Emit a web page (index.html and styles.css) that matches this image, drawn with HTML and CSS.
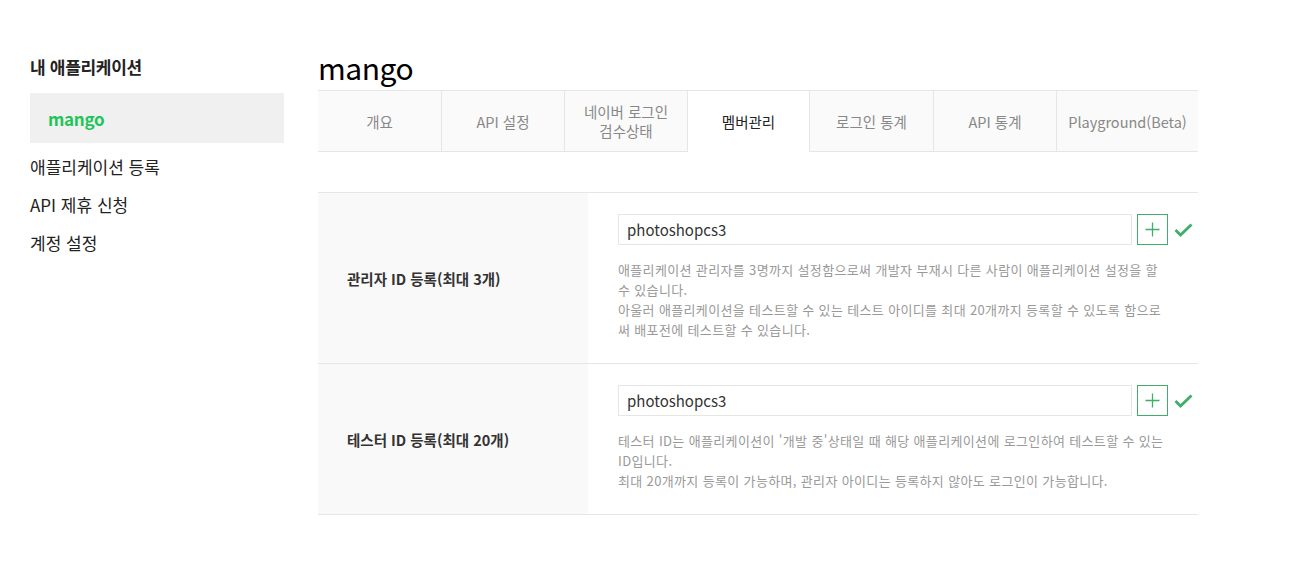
FILE: index.html
```html
<!DOCTYPE html>
<html lang="ko">
<head>
<meta charset="utf-8">
<title>mango - 멤버관리</title>
<link rel="stylesheet" href="styles.css">
</head>
<body>
<div class="page">
  <aside class="sidebar">
    <h2 class="side-title">내 애플리케이션</h2>
    <div class="app-item">mango</div>
    <ul class="side-menu">
      <li>애플리케이션 등록</li>
      <li>API 제휴 신청</li>
      <li>계정 설정</li>
    </ul>
  </aside>
  <main class="main">
    <h1 class="app-title">mango</h1>
    <nav class="tabs">
      <div class="tab">개요</div>
      <div class="tab">API 설정</div>
      <div class="tab two">네이버 로그인<br>검수상태</div>
      <div class="tab active">멤버관리</div>
      <div class="tab">로그인 통계</div>
      <div class="tab">API 통계</div>
      <div class="tab last">Playground(Beta)</div>
    </nav>
    <div class="table">
      <div class="row">
        <div class="th">관리자 ID 등록(최대 3개)</div>
        <div class="td">
          <div class="field">
            <div class="input">photoshopcs3</div>
            <div class="plus"><svg width="15" height="15" viewBox="0 0 15 15"><path d="M7.5 0.5v14M0.5 7.5h14" stroke="#3fae6a" stroke-width="1.3" fill="none"/></svg></div>
            <svg class="check" width="19" height="14" viewBox="0 0 19 14"><path d="M1.5 7l5 5L17.5 1.5" stroke="#3fae6a" stroke-width="2.8" fill="none"/></svg>
          </div>
          <p class="desc">애플리케이션 관리자를 3명까지 설정함으로써 개발자 부재시 다른 사람이 애플리케이션 설정을 할 수 있습니다.<br>아울러 애플리케이션을 테스트할 수 있는 테스트 아이디를 최대 20개까지 등록할 수 있도록 함으로써 배포전에 테스트할 수 있습니다.</p>
        </div>
      </div>
      <div class="row">
        <div class="th">테스터 ID 등록(최대 20개)</div>
        <div class="td">
          <div class="field">
            <div class="input">photoshopcs3</div>
            <div class="plus"><svg width="15" height="15" viewBox="0 0 15 15"><path d="M7.5 0.5v14M0.5 7.5h14" stroke="#3fae6a" stroke-width="1.3" fill="none"/></svg></div>
            <svg class="check" width="19" height="14" viewBox="0 0 19 14"><path d="M1.5 7l5 5L17.5 1.5" stroke="#3fae6a" stroke-width="2.8" fill="none"/></svg>
          </div>
          <p class="desc">테스터 ID는 애플리케이션이 '개발 중'상태일 때 해당 애플리케이션에 로그인하여 테스트할 수 있는 ID입니다.<br>최대 20개까지 등록이 가능하며, 관리자 아이디는 등록하지 않아도 로그인이 가능합니다.</p>
        </div>
      </div>
    </div>
  </main>
</div>
</body>
</html>
```
FILE: styles.css
```css
* { box-sizing: border-box; }
html, body { margin: 0; padding: 0; background: #fff; }
body {
  font-family: "Noto Sans CJK KR", "Noto Sans", sans-serif;
  color: #222;
}
.page {
  display: flex;
  gap: 34px;
  padding-left: 30px;
}
.sidebar {
  width: 254px;
  flex: none;
  padding-top: 55px;
}
.side-title {
  margin: 0 0 14px;
  font-size: 17px;
  line-height: 24px;
  font-weight: bold;
  color: #222;
  letter-spacing: -0.3px;
}
.app-item {
  height: 50px;
  background: #f0f0f0;
  padding-left: 18px;
  display: flex;
  align-items: center;
  color: #1fc45a;
  font-size: 17px;
  font-weight: bold;
  letter-spacing: -0.3px;
}
.side-menu {
  list-style: none;
  margin: 5px 0 0;
  padding: 0;
}
.side-menu li {
  height: 38px;
  line-height: 38px;
  font-size: 17px;
  color: #222;
  letter-spacing: 0;
}
.main {
  width: 880px;
  flex: none;
  padding-top: 47px;
}
.app-title {
  margin: 0 0 3px;
  font-size: 30px;
  line-height: 40px;
  font-weight: normal;
  color: #000;
  letter-spacing: -0.5px;
}
.tabs {
  display: flex;
  height: 62px;
  border-top: 1px solid #e6e6e6;
  border-bottom: 1px solid #e6e6e6;
}
.tab {
  width: 123px;
  flex: none;
  display: flex;
  align-items: center;
  justify-content: center;
  text-align: center;
  background: #fafafa;
  border-left: 1px solid #e6e6e6;
  font-size: 14.5px;
  line-height: 19px;
  color: #888;
  letter-spacing: 0;
}
.tab:first-child { border-left: none; }
.tab.last { flex: 1; width: auto; }
.tab.active {
  background: #fff;
  color: #222;
  margin-bottom: -1px;
  border-right: 1px solid #e6e6e6;
}
.tab.active + .tab { border-left: none; }
.table {
  margin-top: 40px;
  border-top: 1px solid #e6e6e6;
}
.row {
  display: flex;
  border-bottom: 1px solid #e6e6e6;
}
.th {
  width: 270px;
  flex: none;
  background: #f9f9f9;
  padding-left: 29px;
  display: flex;
  align-items: center;
  font-size: 14.5px;
  font-weight: bold;
  color: #333;
  letter-spacing: 0;
}
.td {
  flex: 1;
  padding: 21px 0 23px 30px;
}
.field {
  display: flex;
  align-items: center;
}
.input {
  width: 514px;
  height: 31px;
  border: 1px solid #e6e6e6;
  padding-left: 8px;
  font-size: 15px;
  line-height: 29px;
  color: #333;
}
.plus {
  width: 31px;
  height: 31px;
  margin-left: 5px;
  border: 1px solid #3fae6a;
  display: flex;
  align-items: center;
  justify-content: center;
}
.check { margin-left: 6px; }
.desc {
  margin: 15px 0 0;
  width: 546px;
  font-size: 13px;
  line-height: 20px;
  color: #999;
  letter-spacing: 0.35px;
}
```
